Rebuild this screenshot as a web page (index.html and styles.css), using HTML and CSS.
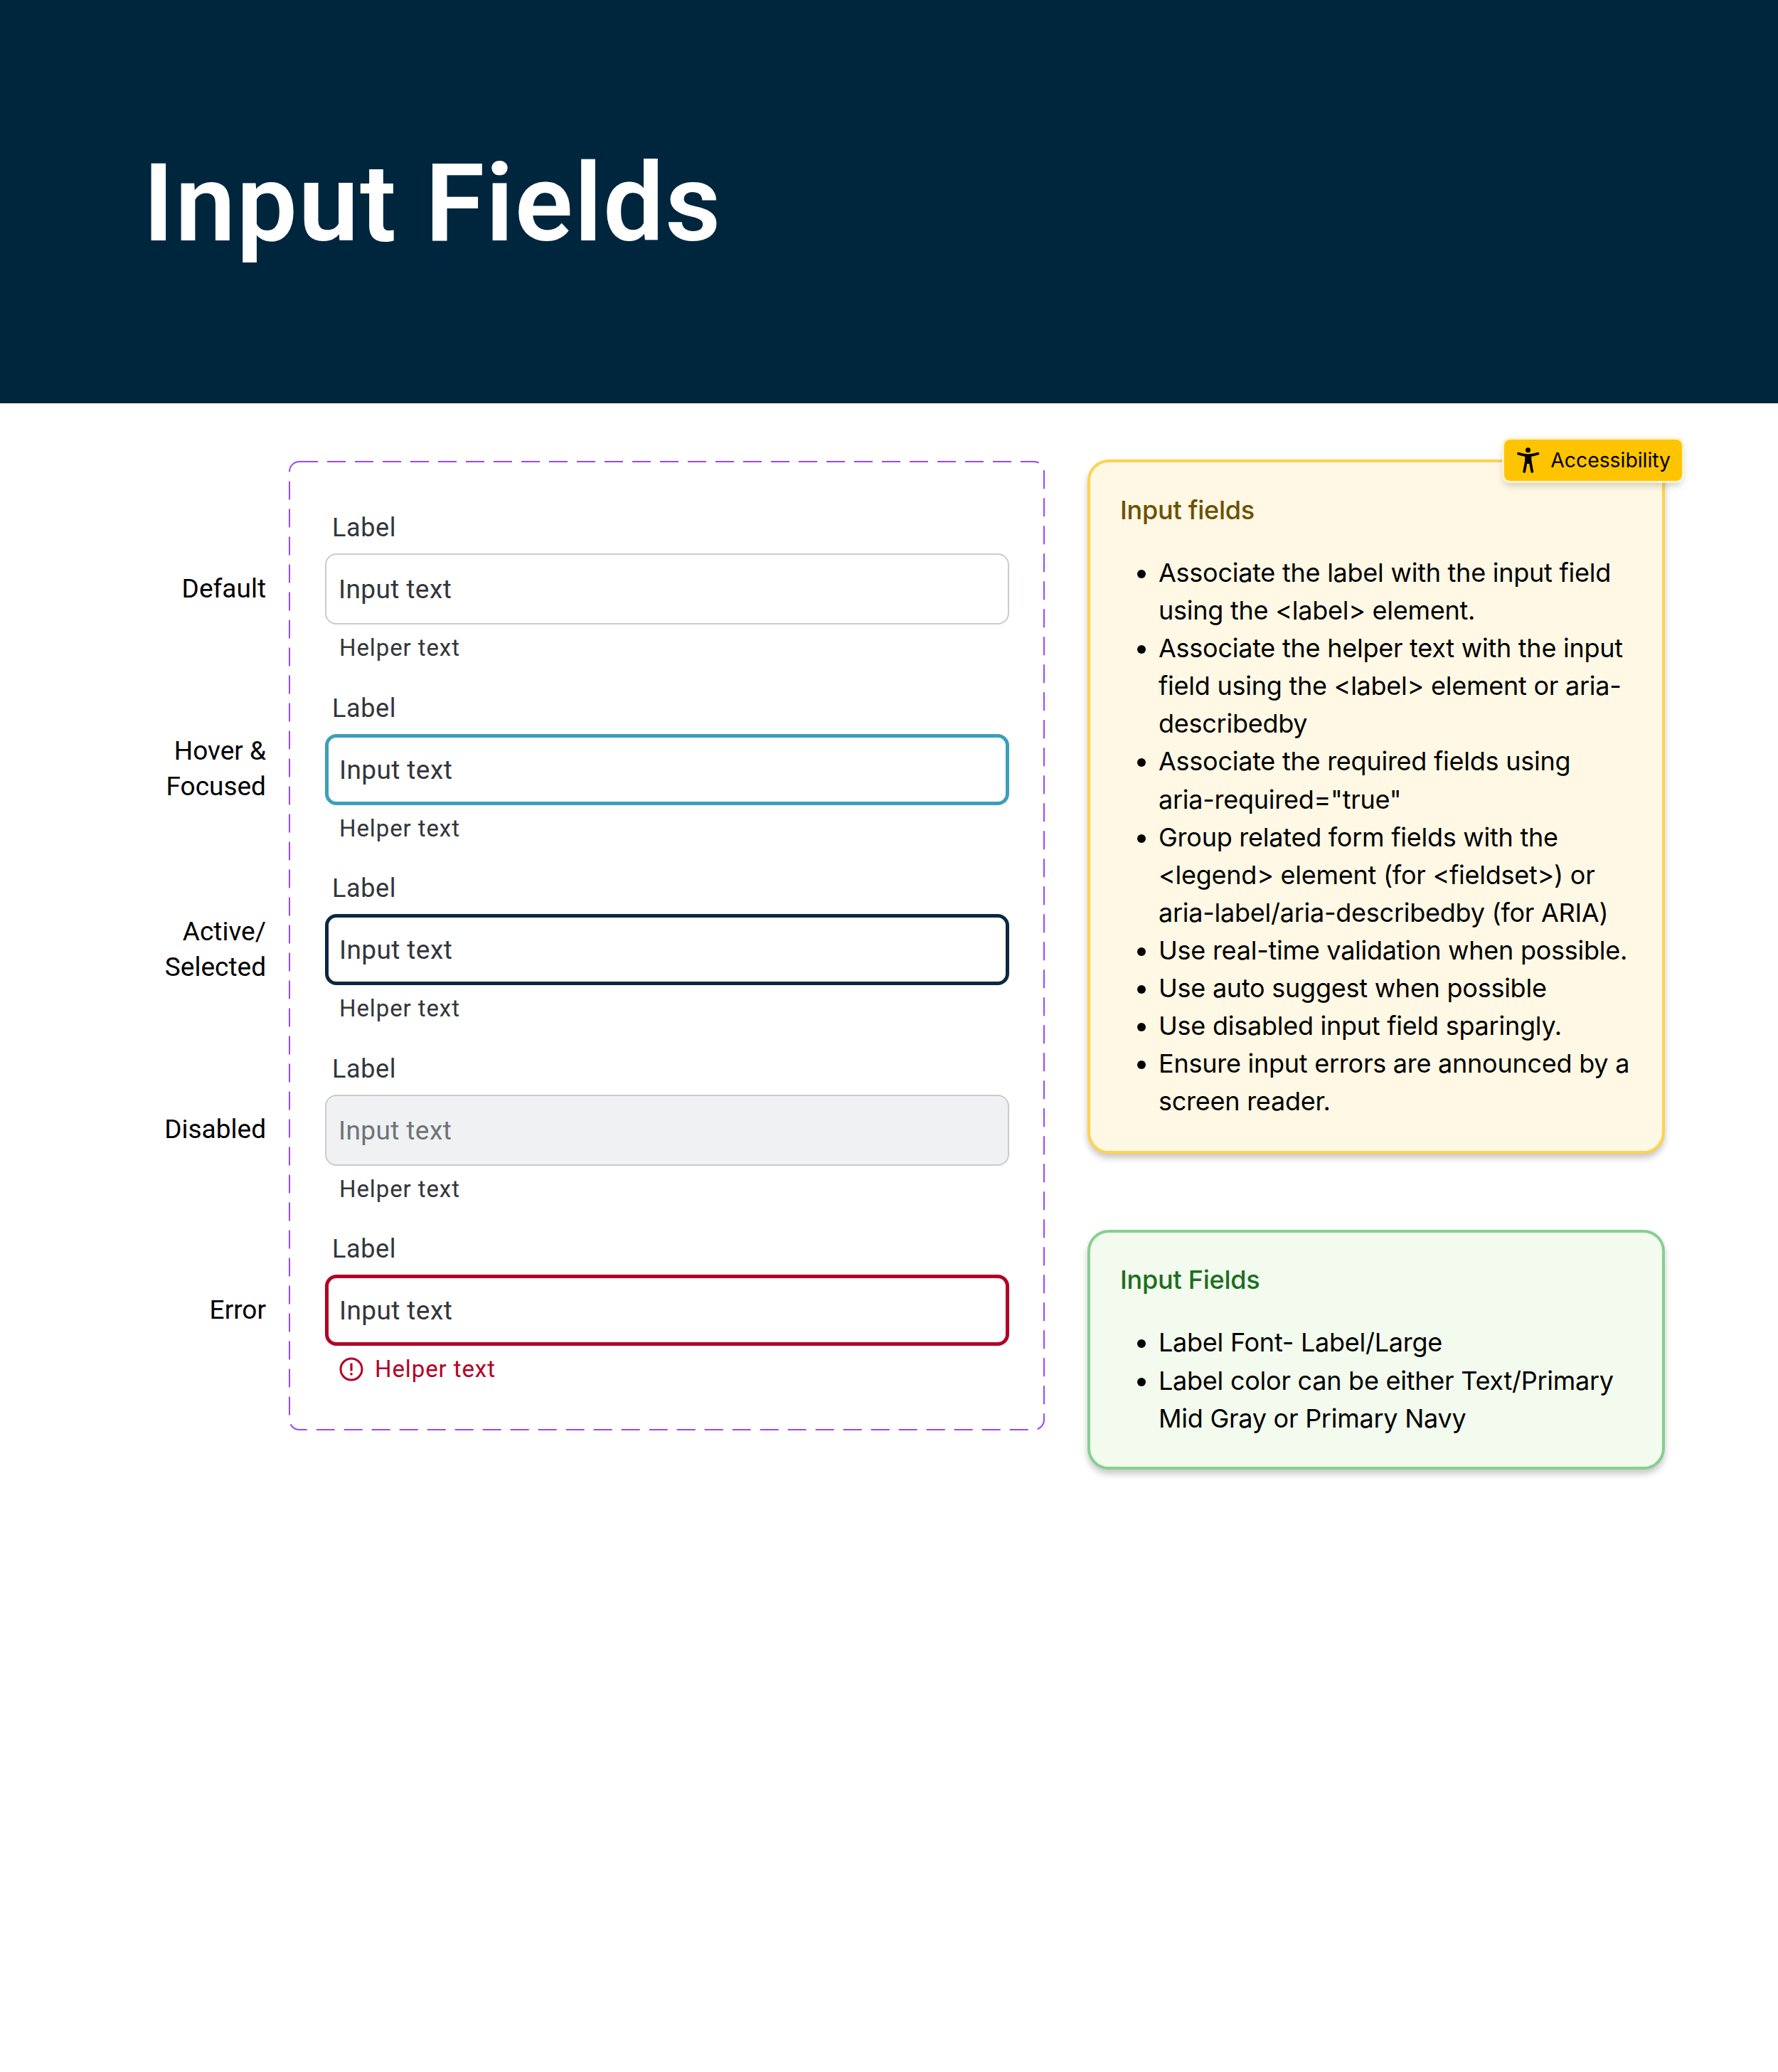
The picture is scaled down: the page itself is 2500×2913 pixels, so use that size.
FILE: index.html
```html
<!DOCTYPE html>
<html lang="en">
  <head>
    <meta charset="UTF-8" />
    <meta name="viewport" content="width=device-width, initial-scale=1.0" />
    <title>Input Fields</title>
    <link rel="stylesheet" href="styles.css">
  </head>
  <body>
    <div class="header">
      <h1>Input Fields</h1>
    </div>

    <div class="main">
      <div class="state-names">
        <div class="state-name">Default</div>
        <div class="state-name">Hover &amp;<br />Focused</div>
        <div class="state-name">Active/<br />Selected</div>
        <div class="state-name">Disabled</div>
        <div class="state-name">Error</div>
      </div>

      <div class="panel">
        <svg class="panel-outline" aria-hidden="true"><rect class="panel-dash" x="1" y="1" rx="14" ry="14" /></svg>
        <div class="row">
          <label class="row-label">Label</label>
          <input class="field" type="text" value="Input text" readonly />
          <div class="helper">Helper text</div>
        </div>
        <div class="row">
          <label class="row-label">Label</label>
          <input class="field field-focus" type="text" value="Input text" readonly />
          <div class="helper">Helper text</div>
        </div>
        <div class="row">
          <label class="row-label">Label</label>
          <input class="field field-active" type="text" value="Input text" readonly />
          <div class="helper">Helper text</div>
        </div>
        <div class="row">
          <label class="row-label">Label</label>
          <input class="field field-disabled" type="text" value="Input text" disabled />
          <div class="helper">Helper text</div>
        </div>
        <div class="row">
          <label class="row-label">Label</label>
          <input class="field field-error" type="text" value="Input text" readonly />
          <div class="helper helper-error">
            <svg class="error-icon" viewBox="0 0 34 34" aria-hidden="true">
              <circle cx="17" cy="17" r="15" fill="none" stroke="currentColor" stroke-width="3" />
              <rect x="15.4" y="8.5" width="3.2" height="11" rx="1" fill="currentColor" />
              <rect x="15.4" y="22" width="3.2" height="3.4" rx="1" fill="currentColor" />
            </svg>
            Helper text
          </div>
        </div>
      </div>

      <div class="notes">
        <div class="card card-yellow">
          <div class="badge">
            <svg class="badge-icon" viewBox="0 0 32 36" aria-hidden="true">
              <circle cx="15.5" cy="3.8" r="3.5" fill="currentColor" />
              <path d="M2 8.7C8 10.6 11.5 11.2 15.7 11.2C20 11.2 23.5 10.6 29.5 8.7" fill="none" stroke="currentColor" stroke-width="3.6" stroke-linecap="round" />
              <path d="M11.2 10.5H20.2L20.4 20L17.2 23H14.2L11.1 20Z" fill="currentColor" />
              <path d="M13 19L10.2 34M18.5 19L21.3 34" fill="none" stroke="currentColor" stroke-width="3.8" stroke-linecap="round" />
            </svg>
            Accessibility
          </div>
          <h2 class="card-title">Input fields</h2>
          <ul class="card-list">
            <li>Associate the label with the input field using the &lt;label&gt; element.</li>
            <li>Associate the helper text with the input field using the &lt;label&gt; element or aria-describedby</li>
            <li>Associate the required fields using aria-required="true"</li>
            <li>Group related form fields with the &lt;legend&gt; element (for &lt;fieldset&gt;) or aria-label/aria-describedby (for ARIA)</li>
            <li>Use real-time validation when possible.</li>
            <li>Use auto suggest when possible</li>
            <li>Use disabled input field sparingly.</li>
            <li>Ensure input errors are announced by a screen reader.</li>
          </ul>
        </div>

        <div class="card card-green">
          <h2 class="card-title">Input Fields</h2>
          <ul class="card-list">
            <li>Label Font- Label/Large</li>
            <li>Label color can be either Text/Primary Mid Gray or Primary Navy</li>
          </ul>
        </div>
      </div>
    </div>
  </body>
</html>
```

FILE: styles.css
```css
body {
  margin: 0;
  min-height: 2913px;
  background: #fff;
  font-family: Roboto, "Liberation Sans", sans-serif;
  color: #000;
}
.header {
  height: 567px;
  background: #00263e;
  display: flex;
  align-items: center;
  padding-left: 201px;
  box-sizing: border-box;
}
h1 {
  margin: 5px 0 0;
  font-size: 152px;
  font-weight: 560;
  letter-spacing: 1.5px;
  color: #fff;
}
.main {
  display: flex;
  padding-top: 81px;
}
.state-names {
  width: 374px;
  padding-top: 53px;
  margin-right: 32px;
  flex: none;
}
.state-name {
  height: 253.5px;
  display: flex;
  align-items: center;
  justify-content: flex-end;
  text-align: right;
  font-size: 37px;
  line-height: 50px;
}
.panel {
  position: relative;
  width: 1063px;
  height: 1363px;
  box-sizing: border-box;
  flex: none;
  padding: 70px 50px 0 51px;
  display: flex;
  flex-direction: column;
  gap: 38.5px;
}
.panel-outline {
  position: absolute;
  top: 0;
  left: 0;
  width: 100%;
  height: 100%;
  pointer-events: none;
}
.panel-dash {
  width: calc(100% - 2px);
  height: calc(100% - 2px);
  fill: none;
  stroke: #9747ff;
  stroke-width: 2px;
  stroke-dasharray: 26 13;
}
.row {
  display: flex;
  flex-direction: column;
}
.row-label {
  height: 48px;
  line-height: 48px;
  padding-left: 10px;
  font-size: 36px;
  font-weight: 450;
  letter-spacing: 0.6px;
  color: #33363a;
  margin-bottom: 12px;
}
.field {
  display: block;
  width: 100%;
  height: 100px;
  box-sizing: border-box;
  border: 2.5px solid #c8ccd0;
  border-radius: 16px;
  padding: 1px 0 0 17px;
  background: #fff;
  font-family: inherit;
  font-size: 37px;
  letter-spacing: 0.4px;
  color: #33363a;
  outline: none;
}
.field-focus {
  border: 5px solid #3b9fbb;
  padding-left: 15px;
}
.field-active {
  border: 5px solid #0b2840;
  padding-left: 15px;
}
.field-disabled {
  background: #f0f1f3;
  color: #6e7378;
  opacity: 1;
}
.field-error {
  border: 5px solid #b30024;
  padding-left: 15px;
}
.helper {
  height: 44px;
  line-height: 44px;
  margin-top: 11px;
  padding-left: 20px;
  font-size: 33px;
  letter-spacing: 0.9px;
  color: #33363a;
}
.helper-error {
  display: flex;
  align-items: center;
  gap: 16px;
  color: #b30024;
}
.error-icon {
  width: 34px;
  height: 34px;
  flex: none;
}
.notes {
  width: 812px;
  margin-left: 60px;
  margin-top: -2px;
  flex: none;
  display: flex;
  flex-direction: column;
  gap: 107px;
  font-family: Inter, "Liberation Sans", sans-serif;
  letter-spacing: -0.25px;
}
.card {
  position: relative;
  box-sizing: border-box;
  border: 4px solid;
  border-radius: 30px;
  box-shadow: 0 6px 10px rgba(0, 0, 0, 0.22);
}
.card-yellow {
  padding: 40px 45px 43px 42px;
  background: #fff8e5;
  border-color: #ffd24f;
}
.card-yellow .card-title {
  color: #6b5100;
}
.card-green {
  padding: 39px 45px 41px 42px;
  background: #f3fbee;
  border-color: #86cf90;
}
.card-green .card-title {
  color: #1b6e1f;
}
.card-title {
  margin: 0 0 35px;
  font-size: 36px;
  font-weight: 500;
  line-height: 54px;
}
.card-list {
  margin: 0;
  padding-left: 54px;
  font-size: 36px;
  line-height: 53.1px;
}
.badge {
  position: absolute;
  top: -32px;
  right: -28px;
  height: 58px;
  box-sizing: border-box;
  display: flex;
  align-items: center;
  gap: 15px;
  padding: 0 16px 0 18px;
  background: #ffc400;
  border-radius: 8px;
  outline: 3px solid #fff3cc;
  box-shadow: 0 6px 12px rgba(0, 0, 0, 0.2);
  font-size: 28.3px;
  letter-spacing: 0;
}
.badge-icon {
  width: 32px;
  height: 36px;
  flex: none;
}
```
